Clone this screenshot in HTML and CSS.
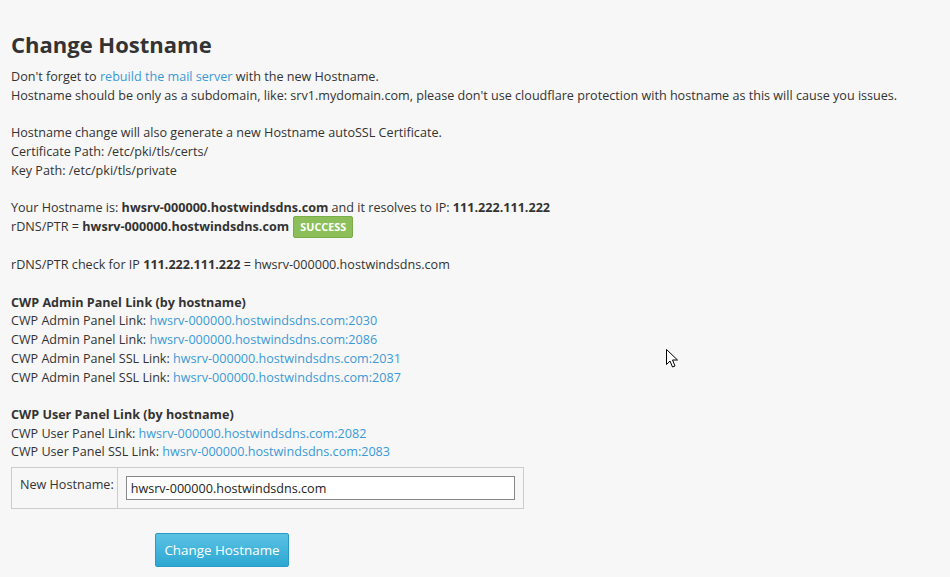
FILE: index.html
```html
<!doctype html>
<html>

<head>
	<meta charset="UTF-8">
	<title>Change Hostname</title>
	<link rel="stylesheet" href="styles.css">
</head>

<body>
	<div class="page">
		<h1>Change Hostname</h1>
		<p>
			Don't forget to <a href="#">rebuild the mail server</a> with the new Hostname.<br>
			Hostname should be only as a subdomain, like: srv1.mydomain.com, please don't use cloudflare protection with hostname as this will cause you issues.
		</p>
		<p>
			Hostname change will also generate a new Hostname autoSSL Certificate.<br>
			Certificate Path: /etc/pki/tls/certs/<br>
			Key Path: /etc/pki/tls/private
		</p>
		<p>
			Your Hostname is: <b>hwsrv-000000.hostwindsdns.com</b> and it resolves to IP: <b>111.222.111.222</b><br>
			rDNS/PTR = <b>hwsrv-000000.hostwindsdns.com</b> <span class="label_success">SUCCESS</span>
		</p>
		<p class="ptr">
			rDNS/PTR check for IP <b>111.222.111.222</b> = hwsrv-000000.hostwindsdns.com
		</p>
		<p>
			<b>CWP Admin Panel Link (by hostname)</b><br>
			CWP Admin Panel Link: <a href="#">hwsrv-000000.hostwindsdns.com:2030</a><br>
			CWP Admin Panel Link: <a href="#">hwsrv-000000.hostwindsdns.com:2086</a><br>
			CWP Admin Panel SSL Link: <a href="#">hwsrv-000000.hostwindsdns.com:2031</a><br>
			CWP Admin Panel SSL Link: <a href="#">hwsrv-000000.hostwindsdns.com:2087</a>
		</p>
		<p class="last">
			<b>CWP User Panel Link (by hostname)</b><br>
			CWP User Panel Link: <a href="#">hwsrv-000000.hostwindsdns.com:2082</a><br>
			CWP User Panel SSL Link: <a href="#">hwsrv-000000.hostwindsdns.com:2083</a>
		</p>
		<form>
			<table class="form_table">
				<tr>
					<td class="lbl">New Hostname:</td>
					<td><input class="txt" name="hostname" value="hwsrv-000000.hostwindsdns.com" /></td>
				</tr>
			</table>
			<div class="actions">
				<button type="button" class="btn_info">Change Hostname</button>
			</div>
		</form>
	</div>
	<svg class="cursor" width="13" height="20" viewBox="0 0 13 20">
		<path d="M0.5 0.5 L0.5 15.5 L4 12 L6.5 18 L9 17 L6.5 11 L11.5 11 Z" fill="#fff" stroke="#000" stroke-width="1" />
	</svg>
</body>

</html>
```

FILE: styles.css
```css
html,body {
	margin: 0;
	padding: 0;
}

body {
	background: #f7f7f7;
	color: #333;
	font-family: "Open Sans", "Liberation Sans", sans-serif;
	font-size: 12.6px;
	line-height: 18.7px;
}

.page {
	padding: 28px 11px 0 11px;
}

h1 {
	margin: 0 0 8px 0;
	font-size: 22px;
	font-weight: bold;
	line-height: 32px;
	color: #333;
}

p {
	margin: 0 0 18.7px 0;
}

p.ptr {
	margin-top: 20px;
}

p.last {
	margin-bottom: 0;
}

b {
	font-weight: bold;
}

a {
	color: #3a9ad8;
	text-decoration: none;
}

/*绿色的成功标签，负的上下外边距让它不撑高行*/
.label_success {
	display: inline-block;
	margin: -4px 0 -4px 1px;
	padding: 2px 6px;
	line-height: 16px;
	font-size: 10.8px;
	font-weight: bold;
	color: #fff;
	background: #8cbf5a;
	border: 1px solid #7bad4c;
	border-radius: 2px;
	vertical-align: middle;
}

.form_table {
	margin-top: 5px;
	border-collapse: collapse;
	border: 1px solid #ccc;
}

.form_table td {
	border: 1px solid #ccc;
	padding: 8px;
	vertical-align: top;
}

.form_table td.lbl {
	white-space: nowrap;
	padding: 8px 3px 8px 8px;
}

.txt {
	display: block;
	box-sizing: border-box;
	width: 389px;
	height: 24px;
	margin: 0;
	padding: 0 4px;
	border: 1px solid #888;
	background: #fff;
	color: #222;
	font-family: "Open Sans", "Liberation Sans", sans-serif;
	font-size: 12.6px;
}

.actions {
	padding: 24px 0 0 144px;
}

.btn_info {
	width: 134px;
	height: 34px;
	border: 1px solid #2a9bc6;
	border-radius: 2px;
	background: linear-gradient(#5cc2e4, #2ca7d2);
	color: #fff;
	font-family: "Open Sans", "Liberation Sans", sans-serif;
	font-size: 13.4px;
	padding: 0;
}

.cursor {
	position: absolute;
	left: 666px;
	top: 349px;
}
```
